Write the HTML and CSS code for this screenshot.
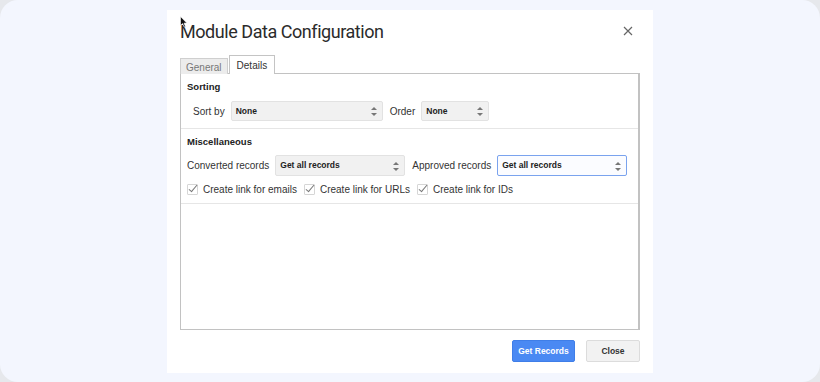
FILE: index.html
```html
<!DOCTYPE html>
<html>
<head>
    <title>Module Data Configuration</title>
    <link rel="stylesheet" href="styles.css">
</head>
<body>
    <div class="frame">
        <div class="dialog">
            <svg class="cursor" width="8" height="12" viewBox="0 0 8 12"><path d="M0.5 0.5 L0.5 9.5 L2.6 7.6 L4.2 11 L5.5 10.4 L4 7.2 L6.8 7.1 Z" fill="#111" stroke="#fff" stroke-width="0.6"/></svg>

            <div class="dialog-head">
                <h1 class="title">Module Data Configuration</h1>
                <svg class="close-x" width="10" height="10" viewBox="0 0 10 10"><path d="M1 1 L9 9 M9 1 L1 9" stroke="#666" stroke-width="1.2"/></svg>
            </div>

            <div class="tabs">
                <span class="tab">General</span>
                <span class="tab active">Details</span>
            </div>

            <div class="panel">
                <div class="group">
                    <h2>Sorting</h2>
                    <div class="row indent">
                        <span class="label">Sort by</span>
                        <div class="select w-sort">None<span class="arrows"></span></div>
                        <span class="label">Order</span>
                        <div class="select w-order">None<span class="arrows"></span></div>
                    </div>
                </div>

                <div class="group">
                    <h2>Miscellaneous</h2>
                    <div class="row">
                        <span class="label">Converted records</span>
                        <div class="select w-rec">Get all records<span class="arrows"></span></div>
                        <span class="label">Approved records</span>
                        <div class="select w-rec focused">Get all records<span class="arrows"></span></div>
                    </div>
                    <div class="checks">
                        <span class="check"><span class="box"></span>Create link for emails</span>
                        <span class="check"><span class="box"></span>Create link for URLs</span>
                        <span class="check"><span class="box"></span>Create link for IDs</span>
                    </div>
                </div>
            </div>

            <div class="actions">
                <button class="btn primary">Get Records</button>
                <button class="btn">Close</button>
            </div>
        </div>
    </div>
</body>
</html>
```

FILE: styles.css
```css
body {
    margin: 0;
    background-color: #e6e8ec;
    font-family: Arial, "Liberation Sans", sans-serif;
}
.frame {
    width: 820px;
    height: 382px;
    box-sizing: border-box;
    padding: 10px 0 0 167px;
    background-color: #f3f6fe;
    border-radius: 18px;
}
.dialog {
    position: relative;
    width: 486px;
    height: 363px;
    box-sizing: border-box;
    padding: 0 13px;
    background-color: white;
}
.cursor {
    position: absolute;
    left: 13px;
    top: 6px;
}
.dialog-head {
    display: flex;
    justify-content: space-between;
    align-items: center;
    height: 42px;
    margin-bottom: 4px;
    padding-right: 7px;
}
.title {
    margin: 0;
    font-family: Roboto, "Open Sans", sans-serif;
    font-size: 18px;
    font-weight: 400;
    color: #2b2b2b;
    letter-spacing: -0.45px;
}
.tabs {
    display: flex;
    align-items: flex-end;
    height: 18px;
    margin-bottom: -1px;
}
.tab {
    height: 16px;
    box-sizing: border-box;
    padding: 0 5px;
    border: 1px solid #cfcfcf;
    border-bottom: none;
    background-color: #ececec;
    color: #777;
    font-size: 10px;
    line-height: 17px;
}
.tab.active {
    position: relative;
    height: 19px;
    margin-left: 1px;
    padding: 0 7px;
    border-color: #c4c4c4;
    background-color: white;
    color: #333;
    line-height: 20px;
}
.panel {
    height: 257px;
    box-sizing: border-box;
    border: 1px solid #c2c2c2;
    border-right-width: 2px;
}
.group {
    padding: 7px 6px 7px;
    border-bottom: 1px solid #e6e6e6;
}
.group h2 {
    margin: 0;
    font-size: 9.5px;
    font-weight: bold;
    line-height: 12px;
    color: #222;
}
.row {
    display: flex;
    align-items: center;
    gap: 6px;
    margin-top: 7px;
}
.row.indent {
    margin-top: 8px;
    padding-left: 6px;
}
.label {
    font-size: 10px;
    color: #333;
    white-space: nowrap;
}
.select {
    position: relative;
    flex: none;
    height: 21px;
    box-sizing: border-box;
    padding-left: 4px;
    border: 1px solid #e2e2e2;
    border-radius: 2px;
    background-color: #f1f1f1;
    font-size: 8.5px;
    font-weight: bold;
    line-height: 19px;
    color: #222;
}
.select.focused {
    border-color: #7aa3ee;
    background-color: #fbfcff;
}
.w-sort { width: 152px; height: 20px; line-height: 18px; }
.w-order { width: 68px; height: 20px; line-height: 18px; }
.w-rec { width: 130px; }
.row .select + .label {
    margin-left: 1px;
}
.arrows {
    position: absolute;
    right: 5px;
    top: 50%;
    width: 6px;
    height: 9px;
    margin-top: -4px;
}
.arrows::before,
.arrows::after {
    content: "";
    position: absolute;
    left: 0;
    border-left: 3px solid transparent;
    border-right: 3px solid transparent;
}
.arrows::before {
    top: 0;
    border-bottom: 3px solid #777;
}
.arrows::after {
    bottom: 0;
    border-top: 3px solid #777;
}
.checks {
    display: flex;
    gap: 7px;
    margin-top: 6px;
    height: 14px;
    align-items: center;
}
.check {
    display: flex;
    align-items: center;
    gap: 5px;
    font-size: 10px;
    color: #333;
    white-space: nowrap;
}
.box {
    position: relative;
    width: 9px;
    height: 9px;
    border: 1px solid #d6d6d6;
    border-radius: 1px;
}
.box::after {
    content: "";
    position: absolute;
    left: 3px;
    top: -2px;
    width: 3px;
    height: 8px;
    border-right: 1.5px solid #777;
    border-bottom: 1.5px solid #777;
    transform: rotate(40deg);
}
.actions {
    display: flex;
    justify-content: flex-end;
    gap: 11px;
    margin-top: 10px;
}
.btn {
    height: 22px;
    padding: 0 4px;
    border: 1px solid #dcdcdc;
    border-radius: 2px;
    background-color: #f2f2f2;
    color: #333;
    font-family: Arial, "Liberation Sans", sans-serif;
    font-size: 8.5px;
    font-weight: bold;
    min-width: 54px;
}
.btn.primary {
    min-width: 63px;
    border-color: #3f7ee8;
    background-color: #4a89f3;
    color: white;
}
```
